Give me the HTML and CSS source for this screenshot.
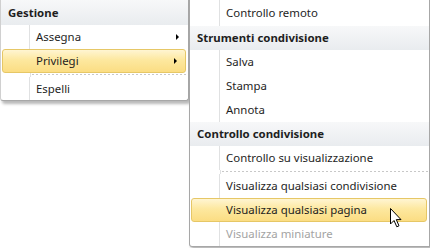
FILE: index.html
```html
<!DOCTYPE html>
<html lang="it">
<head>
    <meta charset="UTF-8">
    <title>Menu condivisione</title>
    <link rel="stylesheet" href="styles.css">
</head>
<body>
    <div class="screen">
        <div class="menu menu-main">
            <div class="header">Gestione</div>
            <div class="item">Assegna<span class="arrow"></span></div>
            <div class="item hot">Privilegi<span class="arrow"></span></div>
            <div class="sep"></div>
            <div class="item short">Espelli</div>
        </div>
        <div class="menu menu-sub">
            <div class="item first">Controllo remoto</div>
            <div class="header">Strumenti condivisione</div>
            <div class="item">Salva</div>
            <div class="item">Stampa</div>
            <div class="item">Annota</div>
            <div class="header">Controllo condivisione</div>
            <div class="item">Controllo su visualizzazione</div>
            <div class="sep"></div>
            <div class="item">Visualizza qualsiasi condivisione</div>
            <div class="item hot">Visualizza qualsiasi pagina</div>
            <div class="item disabled">Visualizza miniature</div>
        </div>
        <svg class="cursor" width="14" height="22" viewBox="0 0 14 22">
            <path d="M1.5 1.5 L1.5 17 L5 13.5 L7.8 19.8 L10 18.8 L7.3 12.6 L12 12.6 Z" fill="#fff" stroke="#000" stroke-width="1" stroke-linejoin="round"/>
        </svg>
    </div>
</body>
</html>
```

FILE: styles.css
```css
body {
    margin: 0;
    background-color: #fff;
    font-family: "Noto Sans", "Open Sans", sans-serif;
    font-size: 11.4px;
    color: #1e1e1e;
    overflow: hidden;
}
.screen {
    position: relative;
    width: 430px;
    height: 248px;
    display: flex;
    align-items: flex-start;
    overflow: hidden;
}
.menu {
    background-color: #fff;
    border: 1px solid #a7a7a7;
    border-top: none;
    box-shadow: 2px 3px 3px rgba(0, 0, 0, 0.28);
    display: flex;
    flex-direction: column;
}
.menu-main {
    width: 191px;
    border-left-color: #d0d0d0;
    border-radius: 0 0 3px 3px;
}
.menu-sub {
    width: 244px;
    border-radius: 0 0 0 3px;
    z-index: 1;
}
.header {
    height: 24px;
    line-height: 24px;
    padding-left: 7px;
    font-weight: bold;
    background: linear-gradient(#f7f8f9, #e9ecef);
}
.menu-main .header {
    height: 25px;
    line-height: 25px;
}
.item {
    position: relative;
    height: 24px;
    line-height: 23px;
    padding-left: 35px;
    background: linear-gradient(#e0e1e2, #e0e1e2) 28px 0 / 1px 100% no-repeat,
        linear-gradient(#fff, #fff) 29px 0 / 1px 100% no-repeat;
}
.menu-sub .item {
    padding-left: 36px;
    background: linear-gradient(#e0e1e2, #e0e1e2) 29px 0 / 1px 100% no-repeat;
}
.menu-sub .item.first {
    height: 26px;
    line-height: 26px;
}
.item.short {
    height: 23px;
}
.item.hot {
    margin: 0 2px 0 1px;
    padding-left: 33px;
    height: 22px;
    line-height: 21px;
    border: 1px solid #e6c766;
    border-radius: 3px;
    background: linear-gradient(#fff5d2, #fde89f 45%, #fbdd83);
}
.menu-sub .item.hot {
    padding-left: 34px;
}
.item.disabled {
    color: #a3a3a3;
}
.sep {
    height: 4px;
    margin-left: 29px;
    background: linear-gradient(#e0e1e2, #e0e1e2) 0 0 / 1px 100% no-repeat,
        repeating-linear-gradient(90deg, #c8c8c8 0 2px, transparent 2px 4px) 2px 1px / 100% 1px no-repeat;
}
.menu-sub .sep {
    margin-left: 30px;
}
.arrow {
    position: absolute;
    right: 9px;
    top: 9px;
    width: 0;
    height: 0;
    border-top: 3px solid transparent;
    border-bottom: 3px solid transparent;
    border-left: 3px solid #000;
}
.item.hot .arrow {
    right: 8px;
    top: 8px;
}
.cursor {
    position: absolute;
    left: 389px;
    top: 207px;
    z-index: 2;
}
```
